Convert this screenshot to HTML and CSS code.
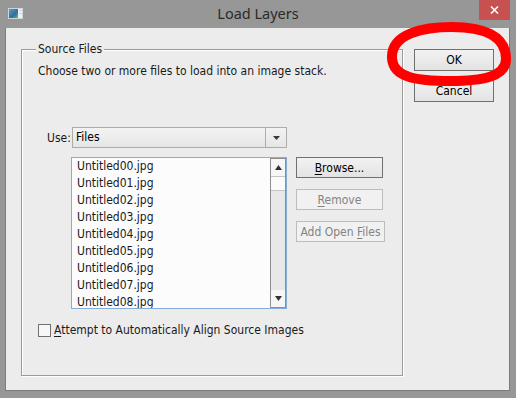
FILE: index.html
```html
<!DOCTYPE html>
<html>
<head>
    <meta charset="UTF-8">
    <title>Load Layers</title>
    <link rel="stylesheet" href="styles.css">
</head>
<body>

<div class="window">

    <div class="titlebar">
        <svg class="app-icon" width="15" height="11" viewBox="0 0 15 11">
            <defs>
                <linearGradient id="thumb" x1="0" y1="0" x2="1" y2="1">
                    <stop offset="0" stop-color="#5aa0c8"/>
                    <stop offset="0.6" stop-color="#2f6f9e"/>
                    <stop offset="1" stop-color="#6fb08a"/>
                </linearGradient>
            </defs>
            <rect x="0.5" y="0.5" width="14" height="10" fill="#eef2f4" stroke="#d0d4d6"/>
            <rect x="1" y="1" width="9" height="9" fill="url(#thumb)"/>
            <rect x="11" y="2" width="3" height="1" fill="#c9d6dc"/>
            <rect x="11" y="5" width="3" height="1" fill="#c9d6dc"/>
        </svg>
        <div class="title">Load Layers</div>
        <div class="close">
            <svg width="9" height="8" viewBox="0 0 9 8">
                <path d="M1 0.5 L8 7.5 M8 0.5 L1 7.5" stroke="#fff" stroke-width="1.6"/>
            </svg>
        </div>
    </div>

    <div class="client">
        <div class="layout">

            <fieldset class="group">
                <legend>Source Files</legend>
                <p class="intro">Choose two or more files to load into an image stack.</p>

                <div class="use-row">
                    <span class="use-label">Use:</span>
                    <div class="select">
                        <span class="select-value">Files</span>
                        <span class="select-arrow">
                            <svg width="7" height="4" viewBox="0 0 7 4"><path d="M0 0 H7 L3.5 4 Z" fill="#3a3a3a"/></svg>
                        </span>
                    </div>
                </div>

                <div class="files-row">
                    <div class="listbox">
                        <ul class="items">
                            <li>Untitled00.jpg</li>
                            <li>Untitled01.jpg</li>
                            <li>Untitled02.jpg</li>
                            <li>Untitled03.jpg</li>
                            <li>Untitled04.jpg</li>
                            <li>Untitled05.jpg</li>
                            <li>Untitled06.jpg</li>
                            <li>Untitled07.jpg</li>
                            <li>Untitled08.jpg</li>
                        </ul>
                        <div class="scrollbar">
                            <div class="sb-btn">
                                <svg width="7" height="5" viewBox="0 0 7 5"><path d="M0 5 H7 L3.5 0 Z" fill="#333"/></svg>
                            </div>
                            <div class="sb-thumb"></div>
                            <div class="sb-track"></div>
                            <div class="sb-btn">
                                <svg width="7" height="5" viewBox="0 0 7 5"><path d="M0 0 H7 L3.5 5 Z" fill="#333"/></svg>
                            </div>
                        </div>
                    </div>

                    <div class="file-buttons">
                        <div class="btn">
                            <span><u>B</u>rowse...</span>
                        </div>
                        <div class="btn disabled">
                            <span><u>R</u>emove</span>
                        </div>
                        <div class="btn disabled wide">
                            <span>Add Open <u>F</u>iles</span>
                        </div>
                    </div>
                </div>

                <label class="check-row">
                    <span class="checkbox"></span>
                    <span><u>A</u>ttempt to Automatically Align Source Images</span>
                </label>
            </fieldset>

            <div class="side">
                <div class="btn dialog-btn">OK</div>
                <div class="btn dialog-btn">Cancel</div>
            </div>

        </div>
    </div>

</div>

<!-- red hand-drawn mark round the OK button -->
<svg class="mark" width="516" height="398" viewBox="0 0 516 398">
    <path d="M392 58 C391 33 425 27 452 27 C482 27 506 35 506 59 C506 77 482 81 450 81 C418 81 393 78 392 58 Z"
          fill="none" stroke="#ff0000" stroke-width="10"/>
</svg>

</body>
</html>
```

FILE: styles.css
```css
* {
    margin: 0;
    padding: 0;
    box-sizing: border-box;
}

body {
    position: relative;
    width: 516px;
    height: 398px;
    overflow: hidden;
    font: 12px/14px "DejaVu Sans Condensed", "DejaVu Sans", sans-serif;
    font-stretch: condensed;
    color: #1a1a1a;
}

ul {
    list-style: none;
}

u {
    text-decoration: underline;
    text-underline-offset: 2px;
}

.window {
    display: flex;
    flex-direction: column;
    width: 516px;
    height: 398px;
    background: #979797;
}

/* title bar */

.titlebar {
    display: grid;
    grid-template-columns: 1fr auto 1fr;
    height: 28px;
}

.app-icon {
    justify-self: start;
    margin: 8px 0 0 8px;
}

.title {
    font: 14.5px/26px "Noto Sans", "Open Sans", sans-serif;
    color: #2a2a2a;
}

.close {
    justify-self: end;
    display: flex;
    align-items: center;
    justify-content: center;
    margin-right: 6px;
    width: 31px;
    height: 20px;
    background: #c75050;
}

/* client area */

.client {
    flex: 1;
    margin: 0 6px 7px 5px;
    border: 1px solid #7b7b7b;
    border-top: none;
    background: #ececec;
}

.layout {
    display: flex;
    align-items: flex-start;
    gap: 11px;
    padding: 14px 0 0 15px;
}

.group {
    width: 382px;
    height: 334px;
    min-width: 0;
    border: 1px solid #9a9a9a;
    box-shadow: 1px 1px 0 #fff, inset 1px 1px 0 #fff;
    padding: 0 0 0 16px;
}

.group legend {
    margin-left: -2px;
    padding: 0 2px;
    line-height: 14px;
    background: #ececec;
}

.intro {
    margin-top: 8px;
}

.use-row {
    display: flex;
    align-items: center;
    margin-top: 49px;
    padding-left: 9px;
}

.use-label {
    width: 25px;
}

.select {
    display: flex;
    width: 215px;
    height: 21px;
    border: 1px solid #acacac;
    background: linear-gradient(#f3f3f3, #e6e6e6);
}

.select-value {
    flex: 1;
    padding-left: 3px;
    line-height: 19px;
    color: #000;
}

.select-arrow {
    display: flex;
    align-items: center;
    justify-content: center;
    width: 21px;
    border-left: 1px solid #acacac;
}

.files-row {
    display: flex;
    gap: 9px;
    margin-top: 9px;
    padding-left: 33px;
}

.listbox {
    display: flex;
    width: 216px;
    height: 152px;
    border: 1px solid #86aedb;
    background: #fcfcfc;
}

.items {
    flex: 1;
    padding-left: 5px;
    overflow: hidden;
}

.items li {
    line-height: 17px;
    white-space: nowrap;
}

.scrollbar {
    display: flex;
    flex-direction: column;
    width: 16px;
    border: 1px solid #8e8e8e;
    background: #e8e8e8;
}

.sb-btn {
    display: flex;
    align-items: center;
    justify-content: center;
    height: 17px;
    background: #f6f6f6;
}

.sb-thumb {
    height: 15px;
    border-top: 1px solid #c4c4c4;
    border-bottom: 1px solid #c4c4c4;
    background: #fbfbfb;
}

.sb-track {
    flex: 1;
}

.file-buttons {
    display: flex;
    flex-direction: column;
    gap: 11px;
}

.btn {
    display: flex;
    align-items: center;
    justify-content: center;
    width: 87px;
    height: 21px;
    border: 1px solid #707070;
    background: linear-gradient(#f2f2f2, #e3e3e3);
    color: #000;
    white-space: nowrap;
}

.btn.disabled {
    border-color: #bdbdbd;
    background: #f1f1f1;
    color: #838383;
}

.btn.wide {
    width: 89px;
}

.check-row {
    display: flex;
    align-items: center;
    gap: 3px;
    margin-top: 14px;
}

.checkbox {
    width: 13px;
    height: 13px;
    border: 1px solid #707070;
    background: #f7f7f7;
}

/* OK / Cancel */

.side {
    display: flex;
    flex-direction: column;
    gap: 9px;
    margin-top: 7px;
}

.dialog-btn {
    width: 80px;
    height: 22px;
}

.mark {
    position: absolute;
    top: 0;
    left: 0;
    pointer-events: none;
}
```
